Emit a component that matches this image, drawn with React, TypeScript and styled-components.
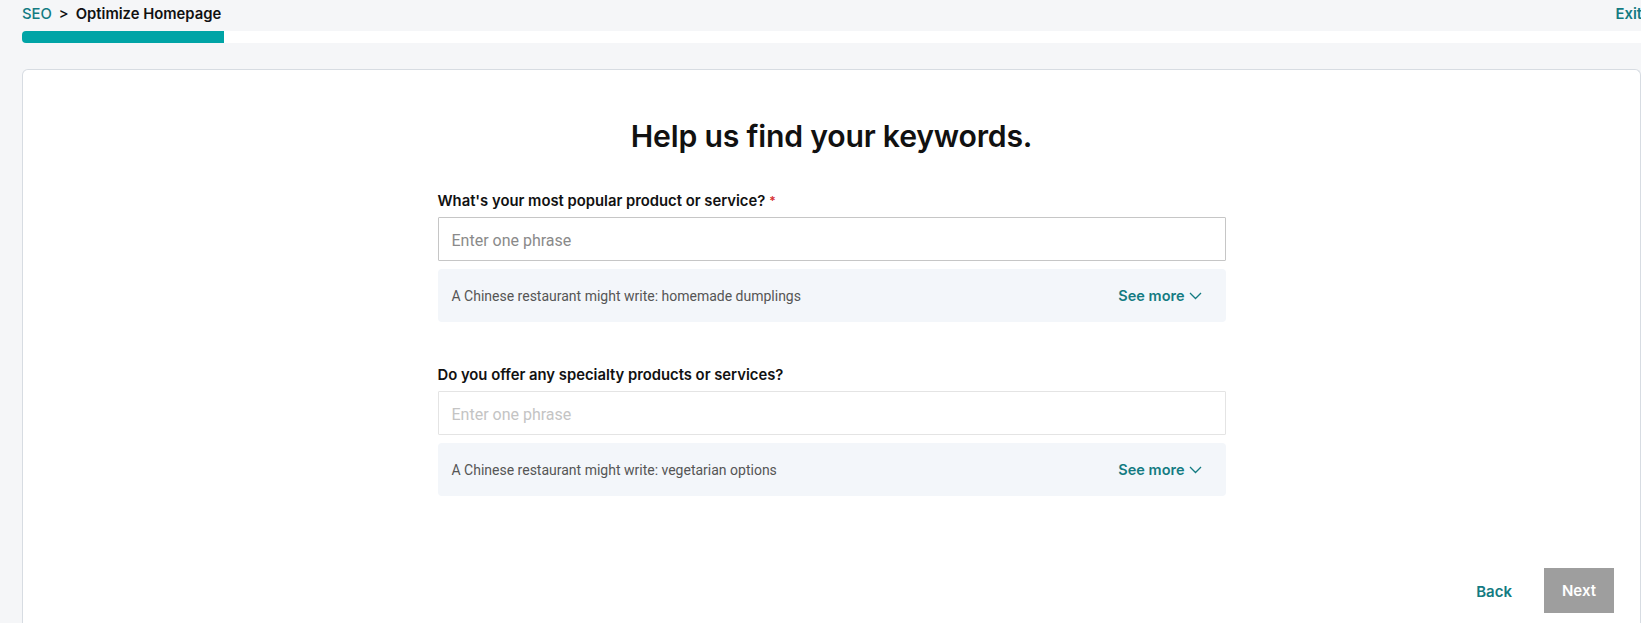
import React from "react";
import styled, { createGlobalStyle } from "styled-components";

const GlobalStyle = createGlobalStyle`
  html, body {
    margin: 0;
    padding: 0;
    background: #f5f6f8;
    font-family: Inter, "Open Sans", Arial, sans-serif;
    overflow: hidden;
  }
  * { box-sizing: border-box; }
`;

const Page = styled.div`
  width: 1641px;
  height: 623px;
  display: flex;
  flex-direction: column;
  overflow: hidden;
`;

const TopBar = styled.div`
  display: flex;
  align-items: center;
  justify-content: space-between;
  height: 30px;
  padding-left: 22px;
  padding-bottom: 2px;
  font-size: 14.8px;
  font-weight: 600;
`;

const Crumbs = styled.div`
  display: flex;
  align-items: center;
  gap: 7px;
  color: #111;
`;

const CrumbLink = styled.span`
  color: #137b82;
  font-weight: 500;
`;

const Sep = styled.span`
  color: #111;
  font-weight: 500;
`;

const ExitLink = styled.span`
  color: #137b82;
  font-weight: 600;
  margin-right: -1px;
`;

const Track = styled.div`
  margin-left: 22px;
  height: 12px;
  background: #ffffff;
  border-radius: 4px 0 0 4px;
  margin-top: 1px;
  display: flex;
`;

const Fill = styled.div`
  background: #00a4a6;
  border-radius: 4px 0 0 4px;
  height: 100%;
`;

const Card = styled.div`
  margin-top: 26px;
  margin-left: 22px;
  flex: 1;
  background: #ffffff;
  border: 1px solid #d7dce2;
  border-bottom: none;
  border-radius: 6px 6px 0 0;
  display: flex;
  flex-direction: column;
  align-items: center;
  padding-top: 46px;
`;

const Heading = styled.h1`
  margin: 0;
  font-size: 30.2px;
  line-height: 40px;
  font-weight: 600;
  color: #111;
  letter-spacing: -0.2px;
`;

const Form = styled.div`
  width: 788px;
  display: flex;
  flex-direction: column;
  margin-top: 35px;
`;

const Field = styled.div<{ $gapTop?: number }>`
  display: flex;
  flex-direction: column;
  margin-top: ${(p) => p.$gapTop ?? 0}px;
`;

const Label = styled.label`
  font-size: 14.8px;
  line-height: 20px;
  font-weight: 600;
  color: #111;
`;

const Required = styled.span`
  color: #d62f2f;
  margin-left: 4px;
  font-size: 12px;
  vertical-align: top;
`;

const Input = styled.input<{ $muted?: boolean }>`
  margin-top: 6px;
  height: 44px;
  border: 1px solid ${(p) => (p.$muted ? "#e4e4e4" : "#c6c6c6")};
  border-radius: 1px;
  padding: 2px 13px 0;
  font-family: Roboto, Arial, sans-serif;
  font-size: 16px;
  outline: none;
  background: #fff;
  &::placeholder {
    color: ${(p) => (p.$muted ? "#c4c4c4" : "#8a8a8a")};
  }
`;

const Hint = styled.div`
  margin-top: 8px;
  height: 53px;
  background: #f3f6fa;
  border-radius: 4px;
  display: flex;
  align-items: center;
  justify-content: space-between;
  padding: 0 24px 0 14px;
`;

const HintText = styled.span`
  font-family: Roboto, Arial, sans-serif;
  font-size: 14px;
  color: #555;
`;

const SeeMore = styled.span`
  display: flex;
  align-items: center;
  gap: 4px;
  color: #137b82;
  font-size: 14.5px;
  font-weight: 600;
`;

const Footer = styled.div`
  align-self: stretch;
  display: flex;
  justify-content: flex-end;
  align-items: center;
  gap: 32px;
  padding-right: 26px;
  margin-top: 72px;
`;

const BackButton = styled.span`
  color: #137b82;
  font-size: 15px;
  font-weight: 600;
  padding-top: 2px;
`;

const NextButton = styled.button`
  width: 70px;
  height: 45px;
  border: none;
  background: #9e9e9e;
  color: #fff;
  font-family: inherit;
  font-size: 15px;
  font-weight: 600;
  border-radius: 0;
`;

const Chevron = () => (
  <svg width="13" height="8" viewBox="0 0 13 8" fill="none">
    <polyline points="1,1 6.5,6.5 12,1" stroke="#137b82" strokeWidth="1.3" />
  </svg>
);

const questions = [
  {
    label: "What's your most popular product or service?",
    required: true,
    hint: "A Chinese restaurant might write: homemade dumplings",
    muted: false,
  },
  {
    label: "Do you offer any specialty products or services?",
    required: false,
    hint: "A Chinese restaurant might write: vegetarian options",
    muted: true,
  },
];

export default function App() {
  return (
    <>
      <GlobalStyle />
      <Page>
        <TopBar>
          <Crumbs>
            <CrumbLink>SEO</CrumbLink>
            <Sep>&gt;</Sep>
            <span>Optimize Homepage</span>
          </Crumbs>
          <ExitLink>Exit</ExitLink>
        </TopBar>
        <Track>
          <Fill style={{ width: 202 }} />
        </Track>
        <Card>
          <Heading>Help us find your keywords.</Heading>
          <Form>
            {questions.map((q, i) => (
              <Field key={q.label} $gapTop={i === 0 ? 0 : 43}>
                <Label>
                  {q.label}
                  {q.required && <Required>*</Required>}
                </Label>
                <Input placeholder="Enter one phrase" $muted={q.muted} />
                <Hint>
                  <HintText>{q.hint}</HintText>
                  <SeeMore>
                    See more
                    <Chevron />
                  </SeeMore>
                </Hint>
              </Field>
            ))}
          </Form>
          <Footer>
            <BackButton>Back</BackButton>
            <NextButton>Next</NextButton>
          </Footer>
        </Card>
      </Page>
    </>
  );
}
